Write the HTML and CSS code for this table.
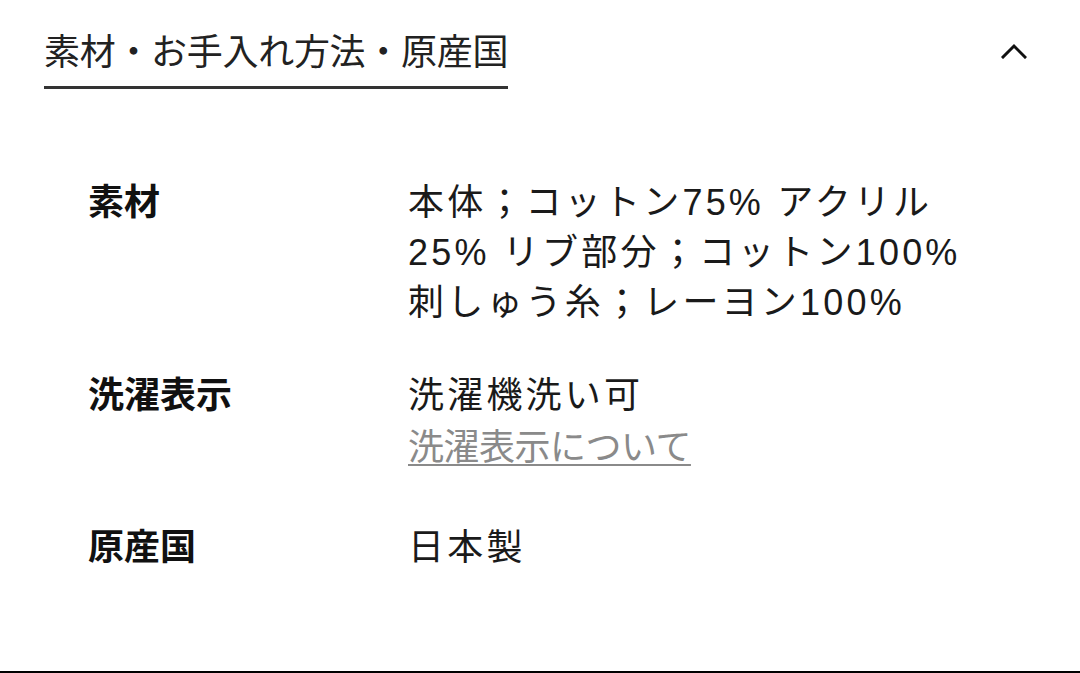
FILE: index.html
```html
<!DOCTYPE html>
<html lang="ja">
<head>
<meta charset="utf-8">
<link rel="stylesheet" href="styles.css">
</head>
<body>
<section class="panel">
  <div class="panel-head">
    <h2 class="panel-title">素材・お手入れ方法・原産国</h2>
    <svg class="chevron" width="26" height="16" viewBox="0 0 26 16" aria-hidden="true">
      <polyline points="2,14 13,3 24,14" fill="none" stroke="#111" stroke-width="3" stroke-linecap="square" stroke-linejoin="miter"/>
    </svg>
  </div>
  <dl class="spec">
    <div class="spec-row row-material">
      <dt class="spec-label">素材</dt>
      <dd class="spec-value">本体<span class="punct">；</span>コットン<span class="latin">75% </span>アクリル<br><span class="latin">25% </span>リブ部分<span class="punct">；</span>コットン<span class="latin">100%</span><br>刺しゅう糸<span class="punct">；</span>レーヨン<span class="latin">100%</span></dd>
    </div>
    <div class="spec-row row-care">
      <dt class="spec-label">洗濯表示</dt>
      <dd class="spec-value">洗濯機洗い可<br><a class="spec-link" href="#">洗濯表示について</a></dd>
    </div>
    <div class="spec-row row-origin">
      <dt class="spec-label">原産国</dt>
      <dd class="spec-value">日本製</dd>
    </div>
  </dl>
</section>
</body>
</html>
```

FILE: styles.css
```css
html, body {
  margin: 0;
  padding: 0;
  background: #fff;
}
body {
  font-family: "Noto Sans CJK JP", "Noto Sans", sans-serif;
  color: #111;
}
.panel {
  box-sizing: border-box;
  height: 673px;
  border-bottom: 2px solid #000;
}
.panel-head {
  display: flex;
  justify-content: space-between;
  align-items: flex-start;
  padding: 24px 53px 0 44px;
}
.panel-title {
  margin: 0;
  font-size: 36px;
  font-weight: 400;
  line-height: 50px;
  color: #222;
  padding-bottom: 12px;
  border-bottom: 3px solid #333;
  letter-spacing: -0.3px;
}
.chevron {
  display: block;
  margin-top: 19px;
}
.spec {
  margin: 85px 0 0 0;
  padding: 0 0 0 88px;
}
.spec-row {
  display: flex;
  align-items: flex-start;
}
.row-care { margin-top: 43px; }
.row-origin { margin-top: 50px; }
.spec-label {
  width: 320px;
  flex: none;
  font-size: 36px;
  font-weight: 700;
  line-height: 50px;
  color: #111;
}
.spec-value {
  margin: 0;
  font-family: "Noto Sans CJK JP", sans-serif;
  font-size: 36px;
  line-height: 50px;
  letter-spacing: 3.2px;
  color: #1a1a1a;
}
.latin {
  font-family: "Liberation Sans", sans-serif;
  line-height: 1;
}
.punct {
  font-family: "Noto Sans CJK TC", "Noto Sans CJK JP", sans-serif;
  line-height: 1;
}
.spec-link {
  display: inline-block;
  margin-top: 2px;
  letter-spacing: -0.5px;
  color: #8a8a8a;
  text-decoration: underline;
  text-decoration-thickness: 2px;
  text-underline-offset: 4px;
}
```
